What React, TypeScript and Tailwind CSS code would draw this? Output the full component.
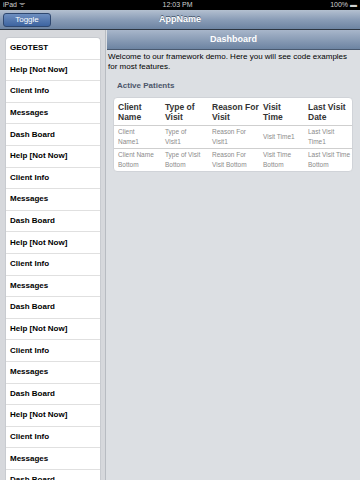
import React from "react";

const menu = ["Help [Not Now]", "Client Info", "Messages", "Dash Board"];

const headers = ["Client Name", "Type of Visit", "Reason For Visit", "Visit Time", "Last Visit Date"];

const rows = [
  ["Client Name1", "Type of Visit1", "Reason For Visit1", "Visit Time1", "Last Visit Time1"],
  ["Client Name Bottom", "Type of Visit Bottom", "Reason For Visit Bottom", "Visit Time Bottom", "Last Visit Time Bottom"],
];

// right padding per column, tuned so the wrapping matches
const pads = ["pr-[9px]", "pr-[9px]", "pr-[4px]", "pr-[8px]", "pr-0"];

const App = () => {
  const items = ["GEOTEST"];
  for (let i = 0; i < 5; i++) items.push(...menu);

  return (
    <div className="w-[360px] h-[480px] overflow-hidden flex flex-col bg-[#dcdfe3]" style={{ fontFamily: '"Liberation Sans", Arial, sans-serif' }}>
      {/* Status bar */}
      <div className="h-[10px] bg-black text-[#d0d0d0] text-[7px] leading-[10px] flex items-center justify-between px-[3px]">
        <span>iPad ᯤ</span>
        <span>12:03 PM</span>
        <span>100% ▬</span>
      </div>

      {/* Nav bar */}
      <div className="h-[20px] relative flex items-center justify-center bg-gradient-to-b from-[#b4c0d0] via-[#8a9db7] to-[#6d84a2] border-b border-[#2d3642]">
        <button className="absolute left-[3px] top-[3px] h-[14px] w-[48px] rounded-[3px] bg-gradient-to-b from-[#6e8fc0] to-[#3d64a0] border border-[#2f4870] text-white text-[8px] leading-[12px]">
          Toggle
        </button>
        <span className="text-white text-[9px] font-bold [text-shadow:0_-1px_0_#4a5a70]">AppName</span>
      </div>

      <div className="flex flex-1 min-h-0">
        {/* Sidebar */}
        <div className="w-[106px] shrink-0 bg-[#d6d8dc] border-r border-[#b8bcc2] pt-[7px] pl-[5px] pr-[4px]">
          <div className="bg-white rounded-t-[4px] border border-[#c8cbd0] border-b-0">
            {items.map((label, i) => (
              <div
                key={i}
                className="h-[21.6px] flex items-center pl-[4px] text-[8px] font-bold text-black border-b border-[#e0e0e0]"
              >
                {label}
              </div>
            ))}
          </div>
        </div>

        {/* Detail */}
        <div className="flex-1 flex flex-col pl-[1px]">
          <div className="h-[20px] flex items-center justify-center bg-gradient-to-b from-[#a8b6ca] to-[#6d84a2] border-b border-[#4a5a70] text-white text-[9px] font-bold">
            Dashboard
          </div>
          <p className="text-[8px] leading-[10px] text-black mt-[2px] pl-[1px] pr-[2px]">
            Welcome to our framework demo. Here you will see code examples for most features.
          </p>
          <div className="pl-[10px] mt-[8px] text-[8px] font-bold text-[#4c566a]">Active Patients</div>
          <div className="ml-[6px] mr-[7px] mt-[5px] bg-white rounded-[4px] border border-[#d0d3d8] overflow-hidden">
            <div className="grid grid-cols-[47px_47px_51px_45px_1fr] border-b border-[#cfcfcf] pt-[4px] pb-[3px] pl-[4px]">
              {headers.map((h, j) => (
                <div key={h} className={`text-[8.5px] leading-[10px] font-bold text-[#333] ${pads[j]}`}>
                  {h}
                </div>
              ))}
            </div>
            {rows.map((r, i) => (
              <div key={i} className={`grid grid-cols-[47px_47px_51px_45px_1fr] pl-[4px] py-[1px] ${i === 0 ? "border-b border-[#cfcfcf]" : ""}`}>
                {r.map((c, j) => (
                  <div key={j} className={`text-[6.5px] leading-[10px] text-[#8a8a8a] ${pads[j]} ${i === 0 && j === 3 ? "self-center" : ""}`}>
                    {c}
                  </div>
                ))}
              </div>
            ))}
          </div>
        </div>
      </div>
    </div>
  );
};

export default App;
